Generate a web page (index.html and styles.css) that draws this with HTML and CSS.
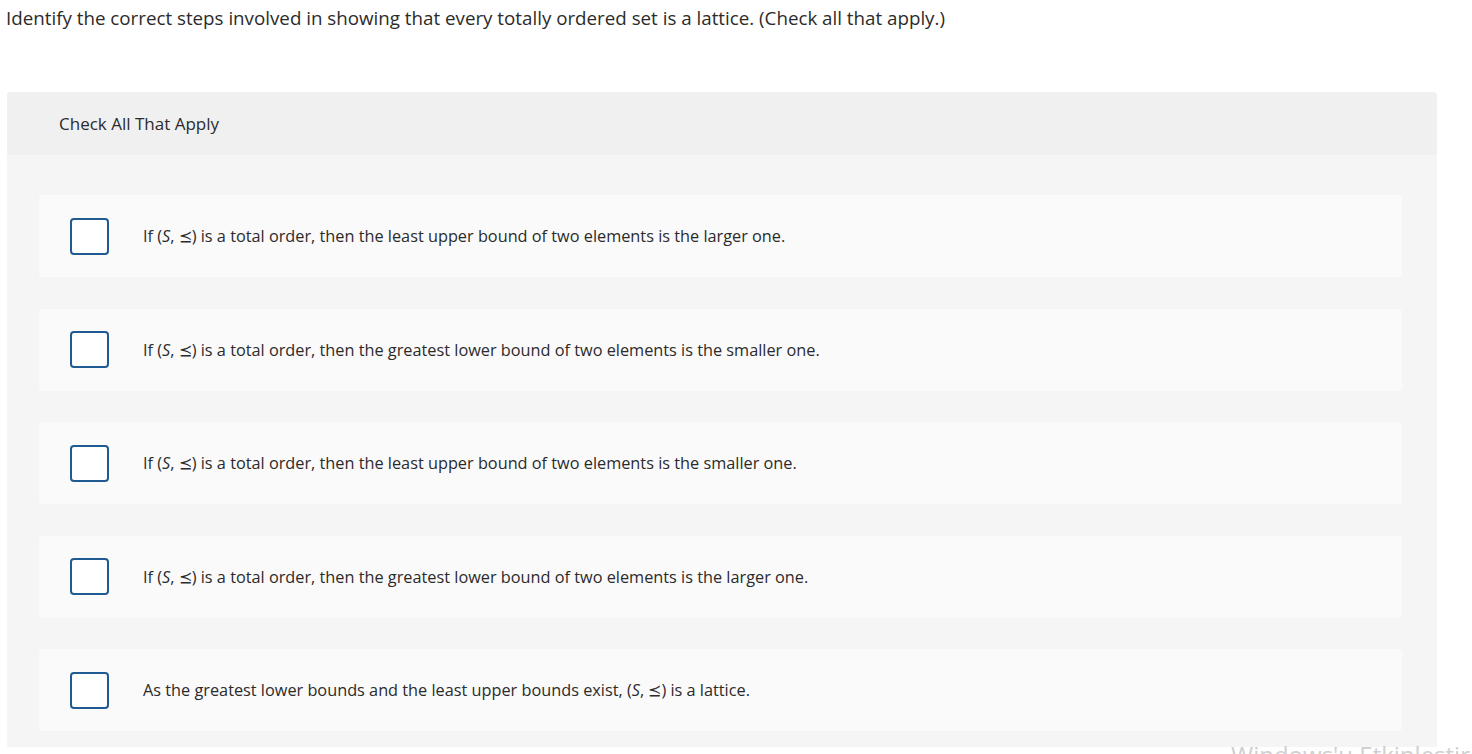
FILE: index.html
```html
<!DOCTYPE html>
<html lang="en">
<head>
<meta charset="utf-8">
<title>Check All That Apply</title>
<link rel="stylesheet" href="styles.css">
</head>
<body>
<h1 class="question">Identify the correct steps involved in showing that every totally ordered set is a lattice. (Check all that apply.)</h1>
<div class="panel">
  <div class="panel-header">Check All That Apply</div>
  <div class="panel-body">
    <label class="option"><span class="box"></span><span class="text">If (<i>S</i>, ⪯) is a total order, then the least upper bound of two elements is the larger one.</span></label>
    <label class="option"><span class="box"></span><span class="text">If (<i>S</i>, ⪯) is a total order, then the greatest lower bound of two elements is the smaller one.</span></label>
    <label class="option"><span class="box"></span><span class="text">If (<i>S</i>, ⪯) is a total order, then the least upper bound of two elements is the smaller one.</span></label>
    <label class="option"><span class="box"></span><span class="text">If (<i>S</i>, ⪯) is a total order, then the greatest lower bound of two elements is the larger one.</span></label>
    <label class="option"><span class="box"></span><span class="text">As the greatest lower bounds and the least upper bounds exist, (<i>S</i>, ⪯) is a lattice.</span></label>
  </div>
</div>
<div class="watermark">Windows'u Etkinleştir</div>
</body>
</html>
```
FILE: styles.css
```css
html, body {
  margin: 0;
  background: #ffffff;
}
body {
  padding: 0 6px;
  font-family: "Open Sans", Lato, Arial, sans-serif;
  color: #2b2b2b;
  overflow: hidden;
  height: 754px;
  position: relative;
}
.question {
  margin: 0;
  font-size: 18.75px;
  font-weight: 400;
  line-height: 36px;
  color: #2b2b2b;
}
.panel {
  margin: 56px 0 0 1px;
  width: 1430px;
  border-radius: 3px 3px 0 0;
  overflow: hidden;
}
.panel-header {
  height: 63px;
  background: #f0f0f0;
  display: flex;
  align-items: center;
  padding-left: 52px;
  font-size: 17px;
  color: #2b2b2b;
}
.panel-body {
  background: #f5f5f5;
  padding: 40px 35px 16px 32px;
  display: flex;
  flex-direction: column;
  gap: 31.5px;
}
.option {
  height: 82px;
  background: #fafafa;
  border-radius: 4px;
  display: flex;
  align-items: center;
  padding-left: 31px;
  gap: 34px;
  font-size: 16.3px;
  color: #2b2b2b;
}
.box {
  width: 35px;
  height: 33px;
  border: 2px solid #1f5a93;
  border-radius: 4px;
  background: #ffffff;
  flex: none;
}
.text i {
  font-style: italic;
}
.watermark {
  position: absolute;
  left: 1231px;
  top: 738px;
  font-family: "Open Sans", "DejaVu Sans", sans-serif;
  font-size: 24px;
  color: #cfcfcf;
  white-space: nowrap;
}
```
